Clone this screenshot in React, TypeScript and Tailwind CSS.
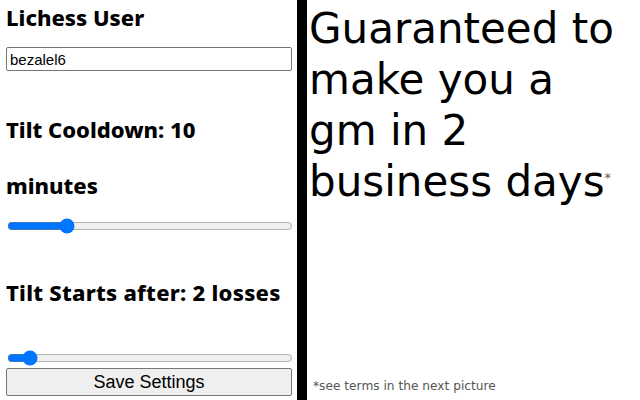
import { useState } from "react";

const headingFont = { fontFamily: '"Noto Sans", "Open Sans", sans-serif' };
const formFont = { fontFamily: '"Liberation Sans", Arial, sans-serif' };

function Slider({ value, min, max, onChange }: { value: number; min: number; max: number; onChange: (v: number) => void }) {
  return (
    <input
      type="range"
      min={min}
      max={max}
      value={value}
      onChange={(e) => onChange(Number(e.target.value))}
      className="ml-[1px] block h-[16px] w-[286px] m-0"
    />
  );
}

export default function App() {
  const [user, setUser] = useState("bezalel6");
  const [cooldown, setCooldown] = useState(10);
  const [losses, setLosses] = useState(2);

  return (
    <div className="flex h-[400px] w-[640px] bg-white text-black overflow-hidden">
      <div className="w-[297px] shrink-0 pl-[6px] pr-[5px]">
        <h2 className="mt-[3px] text-[22px] font-extrabold leading-[28px]" style={headingFont}>
          Lichess User
        </h2>
        <input
          type="text"
          value={user}
          onChange={(e) => setUser(e.target.value)}
          className="mt-[16px] block h-[24px] w-full rounded-[2px] border border-[#767676] px-[3px] text-[15px] outline-none"
          style={formFont}
        />
        <h2 className="mt-[30px] text-[22px] font-extrabold leading-[56px]" style={headingFont}>
          Tilt Cooldown: {cooldown}
          <br />
          minutes
        </h2>
        <div className="mt-[5px]">
          <Slider value={cooldown} min={1} max={48} onChange={setCooldown} />
        </div>
        <h2
          className="mt-[44px] text-[22px] font-extrabold leading-[28px] tracking-[0.25px]"
          style={headingFont}
        >
          Tilt Starts after: {losses} losses
        </h2>
        <div className="mt-[44px]">
          <Slider value={losses} min={1} max={19} onChange={setLosses} />
        </div>
        <button
          className="mt-[2px] block h-[28px] w-full rounded-[2px] border border-[#767676] bg-[#efefef] text-[18px]"
          style={formFont}
        >
          Save Settings
        </button>
      </div>
      <div className="w-[10px] shrink-0 bg-black" />
      <div
        className="flex flex-1 flex-col justify-between pl-[2px]"
        style={{ fontFamily: '"DejaVu Sans", Verdana, sans-serif' }}
      >
        <p className="mt-[3px] text-[42px] leading-[51px]">
          Guaranteed to
          <br />
          make you a
          <br />
          gm in 2
          <br />
          business days
          <sup className="relative -top-[14px] text-[13px] text-[#555]">*</sup>
        </p>
        <p className="mb-[7px] ml-[4px] text-[12.2px] leading-[14px] text-[#555]">*see terms in the next picture</p>
      </div>
    </div>
  );
}
